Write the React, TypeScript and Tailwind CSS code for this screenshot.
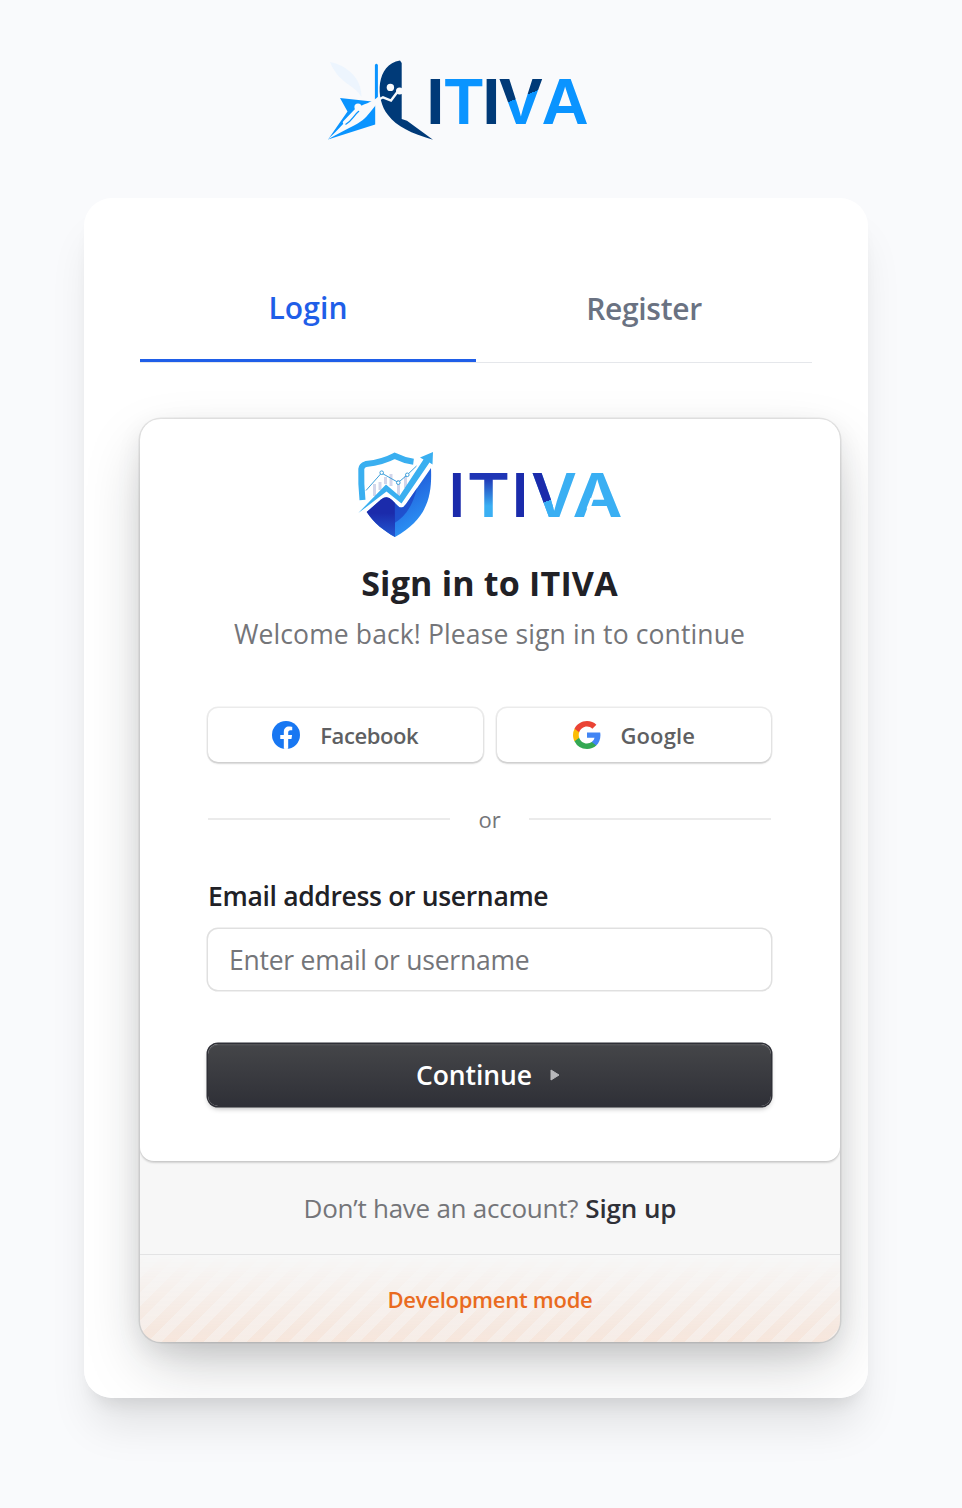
import React from "react";

function BrandLogo() {
  return (
    <svg viewBox="320 52 280 94" className="h-[94px] w-[280px]" aria-label="ITIVA">
      <defs>
        <linearGradient id="brandV" gradientUnits="userSpaceOnUse" x1="515.7" y1="76.7" x2="531.3" y2="115.3">
          <stop offset="0.5" stopColor="#003a78" />
          <stop offset="0.5" stopColor="#0a94ff" />
        </linearGradient>
      </defs>
      <path d="M330 62C346 65 362 78 361.500 97C354 84 339 84 330 62Z" fill="#edf5fe" />
      <path d="M340 98L372 101.500L328 139.500L347.500 111.500Z" fill="#0a94ff" />
      <path d="M375.200 103V124.500L328 139.500Z" fill="#0a94ff" />
      <path d="M374.900 65Q376.400 62.500 377.900 65V99L374.900 102Z" fill="#0a94ff" />
      <path d="M327.500 139.500C343 126 347 118 357 109C363 103 371 104 380 95L384 99C372 105 371 117 355 125Q345 130 327.500 139.500Z" fill="#f9fafc" />
      <path d="M344.500 122.500L356 110.500" stroke="#f9fafc" strokeWidth="3.400" strokeLinecap="round" />
      <path d="M345.500 124.500C352 121 353 116 359 111" stroke="#0a94ff" strokeWidth="1.300" fill="none" />
      <circle cx="358" cy="107" r="3.600" fill="#f9fafc" />
      <path d="M400 60.500L401.700 63V119L407 120.800L433 139.800C411 133 397 127 388 115C375 99 376 64 400 60.500Z" fill="#003a78" />
      <circle cx="390.400" cy="87.400" r="3.700" fill="#f9fafc" />
      <path d="M376 101L383 97.300L391 100.500L397 92.500L403 90" stroke="#f9fafc" strokeWidth="2.400" fill="none" />
      <circle cx="399.600" cy="91" r="3.600" fill="#f9fafc" />
      <g fontFamily="Liberation Sans, Arial, sans-serif" fontWeight="700" fontSize="65.400">
        <text x="426.300" y="124" fill="#003a78">I</text>
        <text x="444.500" y="124" fill="#0a94ff" textLength="38.500" lengthAdjust="spacingAndGlyphs">T</text>
        <text x="482.300" y="124" fill="#003a78">I</text>
        <text x="499" y="124" fill="url(#brandV)">V</text>
        <text x="541.500" y="124" fill="#0a94ff">A</text>
      </g>
    </svg>
  );
}

function ShieldLogo() {
  return (
    <svg viewBox="350 448 280 92" className="h-[92px] w-[280px]" aria-label="ITIVA">
      <defs>
        <linearGradient id="shieldRight" x1="0" y1="0" x2="0.6" y2="1">
          <stop offset="0.2" stopColor="#1c48cf" />
          <stop offset="1" stopColor="#2c95f6" />
        </linearGradient>
        <linearGradient id="shieldLeft" x1="0" y1="0" x2="0" y2="1">
          <stop offset="0.4" stopColor="#1b2bab" />
          <stop offset="1" stopColor="#2358d2" />
        </linearGradient>
        <linearGradient id="wordT" gradientUnits="userSpaceOnUse" x1="0" y1="478" x2="0" y2="506">
          <stop offset="0" stopColor="#1f35b5" />
          <stop offset="1" stopColor="#3aaff3" />
        </linearGradient>
        <linearGradient id="wordV" gradientUnits="userSpaceOnUse" x1="544" y1="492" x2="552" y2="512">
          <stop offset="0.45" stopColor="#1b2bab" />
          <stop offset="0.45" stopColor="#3aaff3" />
        </linearGradient>
        <clipPath id="vLeft"><path d="M525 465H546L557 500L548 520H525Z" /></clipPath>
      </defs>
      <path d="M374.500 484V496M380 482V490M385.500 477V484M391 474V486M398.500 480V496M405.500 476V488" stroke="#d3d6ea" strokeWidth="3" />
      <path d="M362.500 500C361.500 490 361 478 361.300 469Q361.500 465.500 366 464Q383 462 394.500 455.800Q404 460.500 413.500 461.700" fill="none" stroke="#3aaff0" strokeWidth="6" />
      <path d="M366 490.500L381.500 473L398.300 482.500L407.300 474.800L416.500 466" fill="none" stroke="#3c9fdb" strokeWidth="1" />
      <g fill="#fff" stroke="#3c9fdb" strokeWidth="1"><circle cx="381.700" cy="472.700" r="1.800" /><circle cx="398.300" cy="482.700" r="1.800" /><circle cx="407.300" cy="474.800" r="1.800" /></g>
      <path d="M358.300 513L386 484.500L399.500 496L423.500 459.500L420 457.500L433 452L432.500 464.500L429.500 462.500L401.500 503.500L386.500 491.500L365 508Z" fill="#3aaff0" />
      <path d="M366.700 512L381 499.500Q387 495 392 500L398 506Q402 510 406 504L431 468C432 494 429 518 395 537C384 531 374 523 366.700 512Z" fill="url(#shieldRight)" />
      <path d="M366.700 512L381 499.500Q387 495 392 500L395 503V537C384 531 374 523 366.700 512Z" fill="url(#shieldLeft)" />
      <path d="M394.500 502.500L398 506Q402 510 406 504L417 488C413 505 406 516 394.500 523Z" fill="#1c3bc0" opacity="0.65" />
      <g fontFamily="Inter, sans-serif" fontWeight="600" fontSize="60.200">
        <text x="448.500" y="516.500" fill="#1b2bab">I</text>
        <text x="467" y="516.500" fill="url(#wordT)" textLength="43" lengthAdjust="spacingAndGlyphs">T</text>
        <text x="511.800" y="516.500" fill="#1b2bab">I</text>
        <text x="531" y="516.500" fill="#3aaff3" textLength="46" lengthAdjust="spacingAndGlyphs">V</text>
        <text x="531" y="516.500" fill="url(#wordV)" textLength="46" lengthAdjust="spacingAndGlyphs" clipPath="url(#vLeft)">V</text>
        <text x="572.500" y="516.500" fill="#3aaff3" textLength="50" lengthAdjust="spacingAndGlyphs">A</text>
      </g>
      <path d="M590.500 498H594L590.500 508.500H586.500Z" fill="#fff" />
    </svg>
  );
}

function FacebookIcon() {
  return (
    <svg viewBox="0 0 24 24" className="size-7 shrink-0">
      <circle cx="12" cy="12" r="12" fill="#1877f2" />
      <path d="M16.671 15.469L17.203 12H13.875V9.749C13.875 8.800 14.340 7.875 15.831 7.875H17.344V4.922S15.971 4.688 14.658 4.688C11.917 4.688 10.125 6.349 10.125 9.356V12H7.078V15.469H10.125V23.854A12.090 12.090 0 0 0 13.875 23.854V15.469Z" fill="#fff" />
    </svg>
  );
}

function GoogleIcon() {
  return (
    <svg viewBox="0 0 24 24" className="size-7 shrink-0">
      <path fill="#4285f4" d="M23.520 12.273c0-.851-.076-1.670-.218-2.455H12v4.642h6.458a5.520 5.520 0 0 1-2.394 3.622v3.010h3.878c2.269-2.088 3.578-5.165 3.578-8.819Z" />
      <path fill="#34a853" d="M12 24c3.240 0 5.956-1.075 7.942-2.907l-3.878-3.011c-1.075.72-2.450 1.145-4.064 1.145-3.125 0-5.770-2.110-6.715-4.947H1.276v3.110A11.995 11.995 0 0 0 12 24Z" />
      <path fill="#fbbc05" d="M5.285 14.280A7.213 7.213 0 0 1 4.909 12c0-.790.136-1.560.376-2.280V6.610H1.276A11.995 11.995 0 0 0 0 12c0 1.936.464 3.770 1.276 5.390l4.009-3.110Z" />
      <path fill="#ea4335" d="M12 4.773c1.762 0 3.344.605 4.587 1.794l3.442-3.442C17.951 1.190 15.235 0 12 0 7.310 0 3.250 2.690 1.276 6.610l4.009 3.110C6.230 6.884 8.875 4.773 12 4.773Z" />
    </svg>
  );
}

const socialButton =
  "flex h-[54px] flex-1 items-center justify-center gap-5 rounded-[10px] bg-white text-[22px] font-semibold text-[#5e5f62] shadow-[0_0_0_1.500px_rgba(0,0,0,0.08),0_2px_2px_rgba(0,0,0,0.12)]";

function SignInCard() {
  return (
    <div className="mt-14 w-[700px] overflow-hidden rounded-[21px] bg-[#f7f7f7] shadow-[0_0_0_1.500px_rgba(0,0,0,0.09),0_9px_26px_rgba(0,0,0,0.08),0_26px_61px_-9px_rgba(25,28,33,0.25)]">
      <div className="flex h-[742px] flex-col items-center rounded-b-[14px] bg-white pr-[69px] pl-[68px] pt-[29px] shadow-[0_0_0_1px_rgba(0,0,0,0.04),0_1.500px_2px_rgba(0,0,0,0.15)]">
        <ShieldLogo />
        <h1 className="mt-[19px] h-12 text-[34px] leading-12 font-bold tracking-[0.2px] whitespace-nowrap text-[#212126]">Sign in to ITIVA</h1>
        <p className="mt-[7px] h-10 text-[26.500px] leading-10 tracking-[0.12px] whitespace-nowrap text-[#747579]">Welcome back! Please sign in to continue</p>
        <div className="mt-[54px] flex w-full gap-3.5">
          <button className={socialButton}><FacebookIcon /><span className="tracking-[-0.4px]">Facebook</span></button>
          <button className={socialButton}><GoogleIcon /><span className="tracking-[0.1px]">Google</span></button>
        </div>
        <div className="mt-[39px] flex h-9 w-full items-center gap-7 text-[22px] text-[#747579]">
          <span className="h-[1.500px] flex-1 bg-[#ebebeb]" />
          <span>or</span>
          <span className="h-[1.500px] flex-1 bg-[#ebebeb]" />
        </div>
        <label htmlFor="identifier" className="mt-[39px] h-10 w-full text-[26.500px] leading-10 font-semibold tracking-[-0.33px] whitespace-nowrap text-[#212126]">Email address or username</label>
        <input id="identifier" placeholder="Enter email or username" className="mt-[13px] h-[61px] w-full shrink-0 rounded-[10px] bg-white px-[21px] pt-px text-[26.500px] tracking-[-0.25px] shadow-[0_0_0_1.500px_rgba(0,0,0,0.12)] outline-none placeholder:text-[#747579]" />
        <button className="mt-[54px] flex h-[62px] w-full shrink-0 items-center justify-center gap-[18px] rounded-[10px] bg-linear-to-b from-[#454649] to-[#2f3037] pr-[3px] text-[26.500px] font-semibold text-white shadow-[0_0_0_1.500px_#2f3037,0_3px_5px_rgba(0,0,0,0.25),inset_0_1.500px_0_rgba(255,255,255,0.07)]">
          <span className="pt-0.5 tracking-[-0.1px]">Continue</span>
          <svg viewBox="0 0 10 12" className="h-3 w-2.5"><path d="M1 1L9 6L1 11Z" fill="#b8b8bb" stroke="#b8b8bb" strokeLinejoin="round" /></svg>
        </button>
      </div>
      <div className="flex h-[93px] items-center justify-center gap-[7px] pt-0.5 text-[26px] text-[#747579]">
        <span className="tracking-[-0.25px]">Don’t have an account?</span>
        <a className="font-semibold tracking-[-0.1px] text-[#2f3037]">Sign up</a>
      </div>
      <div className="relative flex h-[88px] items-center justify-center border-t border-[#e3e3e4] pt-0.5 text-[22px] font-semibold tracking-[-0.27px] text-[#e96b1f]">
        <div className="absolute inset-0 bg-[repeating-linear-gradient(-45deg,rgba(243,107,22,0.07)_0px,rgba(243,107,22,0.07)_10px,rgba(243,107,22,0.12)_10px,rgba(243,107,22,0.12)_20px)] [mask-image:linear-gradient(transparent,black)]" />
        <span className="relative">Development mode</span>
      </div>
    </div>
  );
}

export default function App() {
  return (
    <div className="min-h-[1508px] w-[962px] overflow-hidden bg-[#f9fafc] font-['Open_Sans','Noto_Sans',sans-serif]">
      <header className="flex h-[198px] pt-[52px] pl-80"><BrandLogo /></header>
      <main className="ml-[84px] w-[784px] rounded-[28px] shadow-[0_35px_44px_-9px_rgba(0,0,0,0.1),0_14px_18px_-10px_rgba(0,0,0,0.1)]">
        <div className="h-[1200px] overflow-hidden rounded-[28px] bg-white pt-14 pl-14">
          <div className="flex h-[109px] w-[672px] border-b border-[#e5e7eb] text-[30px] font-semibold">
            <button className="flex-1 border-b-3 border-[#1f5ee8] pt-0.5 tracking-[0.1px] text-[#1f5ee8]">Login</button>
            <button className="flex-1 tracking-[-0.3px] text-[#6a7282]">Register</button>
          </div>
          <SignInCard />
        </div>
      </main>
    </div>
  );
}
